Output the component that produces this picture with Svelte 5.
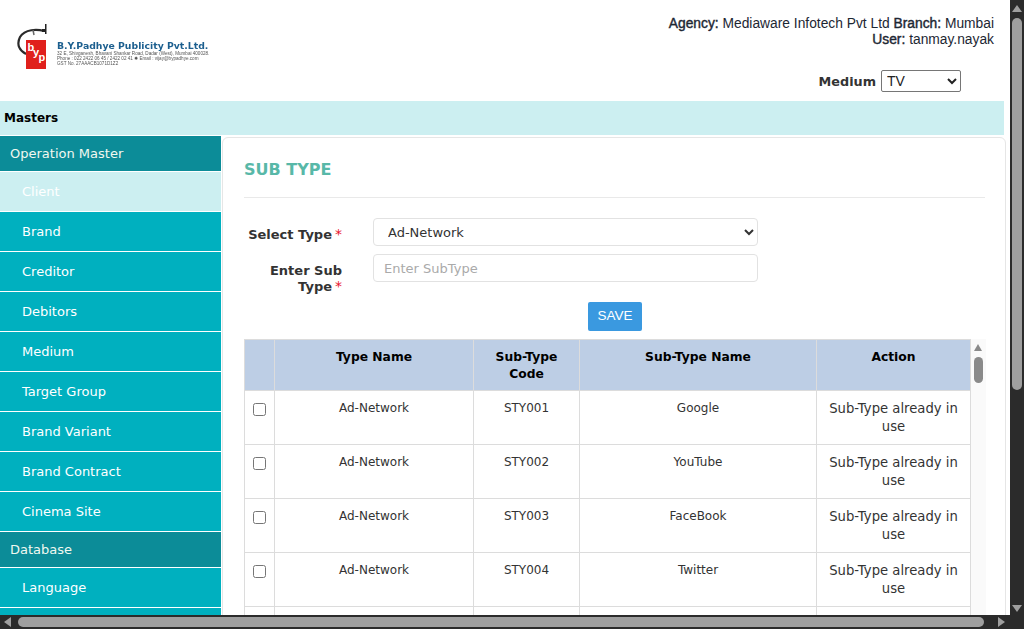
<script>
  const menu = [
    { label: "Operation Master", head: true },
    { label: "Client", active: true },
    { label: "Brand" },
    { label: "Creditor" },
    { label: "Debitors" },
    { label: "Medium" },
    { label: "Target Group" },
    { label: "Brand Variant" },
    { label: "Brand Contract" },
    { label: "Cinema Site" },
    { label: "Database", head: true },
    { label: "Language" },
    { label: "" },
  ];

  const rows = [
    { code: "STY001", name: "Google" },
    { code: "STY002", name: "YouTube" },
    { code: "STY003", name: "FaceBook" },
    { code: "STY004", name: "Twitter" },
  ];
</script>

<div class="shell">
  <div class="upper">
    <div class="page">
      <header>
        <div class="logo">
          <svg width="34" height="46" viewBox="0 0 34 46">
            <path d="M27 7 C20 5 8 5 3 13 C-1 21 3 27 9 30" fill="none" stroke="#2a2a2a" stroke-width="2.200" />
            <path d="M25 5 L28 5 L28 0 L29.500 0 L29.500 10 L28 10 L28 8 L25 8 Z" fill="#222" />
            <path d="M16 6 L17 11" stroke="#666" stroke-width="1.500" />
            <rect x="9" y="16" width="20" height="29" fill="#e0201c" />
            <text class="mark" x="10.500" y="27">b</text>
            <text class="mark" x="16" y="32">y</text>
            <text class="mark" x="21.500" y="37">p</text>
          </svg>
          <div class="logo-text">
            <div class="logo-name">B.Y.Padhye Publicity Pvt.Ltd.</div>
            <div class="logo-small">32 E, Shivganesh, Bhavani Shankar Road, Dadar (West), Mumbai 400028.</div>
            <div class="logo-small">Phone : 022 2422 06 45 / 2422 02 41 ✹ Email : vijay@bypadhye.com</div>
            <div class="logo-small">GST No. 27AAACB1071D1Z2</div>
          </div>
        </div>
        <div class="info">
          <div class="agency"><span class="key">Agency:</span> Mediaware Infotech Pvt Ltd <span class="key">Branch:</span> Mumbai</div>
          <div class="agency"><span class="key">User:</span> tanmay.nayak</div>
          <div class="medium">
            <label for="medium">Medium</label>
            <select id="medium"><option>TV</option></select>
          </div>
        </div>
      </header>

      <div class="masters">Masters</div>

      <div class="body">
        <nav>
          {#each menu as item}
            <div class="item" class:head={item.head} class:active={item.active}>{item.label}</div>
          {/each}
        </nav>

        <main>
          <h2>SUB TYPE</h2>
          <div class="form">
            <div class="field">
              <label for="type">Select Type<span class="req">*</span></label>
              <select id="type"><option>Ad-Network</option></select>
            </div>
            <div class="field second">
              <label for="sub">Enter Sub Type<span class="req">*</span></label>
              <input id="sub" placeholder="Enter SubType" />
            </div>
            <div class="actions"><button>SAVE</button></div>
          </div>

          <div class="table-wrap">
            <table>
              <colgroup>
                <col style="width:30px" />
                <col style="width:199px" />
                <col style="width:106px" />
                <col style="width:237px" />
                <col style="width:154px" />
              </colgroup>
              <thead>
                <tr>
                  <th></th>
                  <th>Type Name</th>
                  <th>Sub-Type Code</th>
                  <th>Sub-Type Name</th>
                  <th>Action</th>
                </tr>
              </thead>
              <tbody>
                {#each rows as row}
                  <tr>
                    <td class="check"><input type="checkbox" /></td>
                    <td>Ad-Network</td>
                    <td>{row.code}</td>
                    <td>{row.name}</td>
                    <td class="action">Sub-Type already in use</td>
                  </tr>
                {/each}
                <tr>
                  <td></td>
                  <td></td>
                  <td></td>
                  <td></td>
                  <td></td>
                </tr>
              </tbody>
            </table>
            <div class="inner-scroll">
              <div class="up-small"></div>
              <div class="thumb-small"></div>
            </div>
          </div>
        </main>
      </div>
    </div>

    <div class="vbar">
      <div class="arrow-up"></div>
      <div class="vthumb"></div>
      <div class="arrow-down"></div>
    </div>
  </div>

  <div class="hbar">
    <div class="arrow-left"></div>
    <div class="hthumb"></div>
    <div class="arrow-right"></div>
  </div>
</div>

<style>
  :global(body) {
    margin: 0;
    background: #fff;
    overflow: hidden;
  }

  .shell {
    width: 1024px;
    height: 629px;
    display: flex;
    flex-direction: column;
    overflow: hidden;
    font-family: "DejaVu Sans", Verdana, sans-serif;
    font-size: 13px;
    color: #333;
  }

  .upper {
    flex: 1;
    min-height: 0;
    display: flex;
  }

  .page {
    flex: 1;
    min-width: 0;
    overflow: hidden;
  }

  header {
    height: 101px;
    display: flex;
    justify-content: space-between;
    box-sizing: border-box;
  }

  .logo {
    display: flex;
    align-items: flex-end;
    gap: 6px;
    padding: 24px 0 0 17px;
    height: 46px;
    filter: blur(0.3px);
  }

  .mark {
    font-family: "Liberation Sans", Arial, sans-serif;
    font-weight: bold;
    font-size: 11px;
    fill: #fff;
  }

  .logo-text {
    padding-bottom: 4px;
  }

  .logo-name {
    font-family: "DejaVu Sans", Verdana, sans-serif;
    font-weight: bold;
    font-size: 9.300px;
    line-height: 11px;
    color: #1c5f8f;
    white-space: nowrap;
  }

  .logo-small {
    font-family: "Liberation Sans", Arial, sans-serif;
    font-size: 4.600px;
    line-height: 5px;
    color: #555;
    white-space: nowrap;
  }

  .info {
    padding: 16px 16px 0 0;
    text-align: right;
  }

  .agency {
    font-family: "Liberation Sans", Arial, sans-serif;
    font-size: 13.800px;
    line-height: 16px;
    color: #1d2733;
  }

  .key {
    -webkit-text-stroke: 0.4px #1d2733;
  }

  .medium {
    margin: 22px 33px 0 0;
    display: flex;
    justify-content: flex-end;
    align-items: center;
    gap: 5px;
  }

  .medium label {
    font-weight: bold;
    font-size: 12.800px;
    color: #333;
  }

  .medium select {
    width: 80px;
    height: 22px;
    border: 1px solid #767676;
    border-radius: 2px;
    background: #fff;
    font-family: "Liberation Sans", Arial, sans-serif;
    font-size: 14px;
    color: #222;
    padding: 0 0 0 1px;
  }

  .masters {
    width: 1004px;
    height: 34px;
    background: #cceff1;
    box-sizing: border-box;
    padding-left: 4px;
    line-height: 34px;
    font-weight: bold;
    font-size: 12px;
    color: #000;
  }

  .body {
    display: flex;
    align-items: flex-start;
    padding-top: 1px;
  }

  nav {
    width: 221px;
    flex: none;
    margin-right: 1px;
  }

  .item {
    height: 39px;
    margin-bottom: 1px;
    box-sizing: border-box;
    padding-left: 22px;
    line-height: 39px;
    background: #00b0bf;
    color: #fff;
  }

  .item.head {
    height: 35px;
    padding-left: 10px;
    line-height: 35px;
    background: #0c8c98;
    color: #f0f8f0;
  }

  .item.active {
    background: #cceff1;
  }

  main {
    width: 784px;
    flex: none;
    box-sizing: border-box;
    margin-top: 1px;
    padding: 0 20px 0 21px;
    border: 1px solid #e6e6e6;
    border-radius: 6px 6px 0 0;
    background: #fff;
  }

  h2 {
    margin: 0;
    height: 59px;
    line-height: 63px;
    font-family: "DejaVu Sans", Verdana, sans-serif;
    font-size: 16px;
    font-weight: bold;
    color: #58b8a8;
    border-bottom: 1px solid #e9e9e9;
  }

  .form {
    padding-top: 20px;
  }

  .field {
    display: flex;
    align-items: flex-start;
    gap: 31px;
    margin-bottom: 8px;
  }

  .field.second {
    margin-bottom: 7px;
  }

  .field label {
    width: 98px;
    flex: none;
    text-align: right;
    font-weight: bold;
    font-size: 13px;
    line-height: 16px;
    color: #333;
    padding-top: 9px;
  }

  .req {
    color: #e8122d;
    margin-left: 3px;
    font-weight: normal;
    font-size: 14px;
    line-height: 14px;
  }

  .field select,
  .field input {
    width: 385px;
    height: 28px;
    box-sizing: border-box;
    border: 1px solid #e2e2e2;
    border-radius: 4px;
    background: #fff;
    font-family: "DejaVu Sans", Verdana, sans-serif;
    font-size: 13px;
    color: #333;
  }

  .field select {
    padding-left: 10px;
  }

  .field input {
    padding: 0 10px;
  }

  .field input::placeholder {
    color: #aaa;
    opacity: 1;
  }

  .actions {
    width: 742px;
    box-sizing: border-box;
    padding-left: 344px;
  }

  button {
    display: block;
    width: 54px;
    height: 29px;
    border: none;
    border-radius: 2px;
    padding: 0 0 2px;
    background: #3a99e0;
    color: #fff;
    font-family: "Liberation Sans", Arial, sans-serif;
    font-size: 13.500px;
  }

  .table-wrap {
    margin-top: 8px;
    display: flex;
    align-items: flex-start;
    width: 742px;
    height: 300px;
    background: #fafafa;
  }

  table {
    width: 727px;
    flex: none;
    table-layout: fixed;
    border-collapse: collapse;
    background: #fff;
    font-size: 12px;
    color: #333;
  }

  th,
  td {
    border: 1px solid #dcdcdc;
    text-align: center;
    vertical-align: top;
    box-sizing: border-box;
  }

  th {
    height: 51px;
    padding: 9px 8px 0;
    background: #bdcee5;
    color: #000;
    font-size: 12.300px;
    line-height: 17px;
  }

  td {
    height: 54px;
    padding: 8px 8px 0;
    line-height: 18px;
  }

  td.action {
    font-size: 13.200px;
    line-height: 18px;
    padding: 9px 4px 0;
  }

  td.check {
    padding: 12px 0 0;
  }

  td.check input {
    margin: 0;
    width: 13px;
    height: 13px;
    vertical-align: top;
  }

  .inner-scroll {
    width: 15px;
    height: 100%;
  }

  .up-small {
    margin: 5px 0 0 3px;
    width: 0;
    height: 0;
    border-left: 4.500px solid transparent;
    border-right: 4.500px solid transparent;
    border-bottom: 7px solid #8a8a8a;
  }

  .thumb-small {
    margin: 6px 0 0 3px;
    width: 9px;
    height: 26px;
    border-radius: 5px;
    background: #8a8a8a;
  }

  .vbar {
    width: 14px;
    flex: none;
    background: #2b2b2b;
    display: flex;
    flex-direction: column;
    align-items: center;
  }

  .arrow-up {
    margin-top: 5px;
    width: 0;
    height: 0;
    border-left: 5px solid transparent;
    border-right: 5px solid transparent;
    border-bottom: 7px solid #9f9f9f;
  }

  .vthumb {
    margin-top: 6px;
    width: 10px;
    height: 372px;
    border-radius: 5px;
    background: #9f9f9f;
  }

  .arrow-down {
    margin-top: auto;
    margin-bottom: 3px;
    width: 0;
    height: 0;
    border-left: 5px solid transparent;
    border-right: 5px solid transparent;
    border-top: 7px solid #9f9f9f;
  }

  .hbar {
    height: 14px;
    flex: none;
    background: #2b2b2b;
    display: flex;
    align-items: center;
    box-sizing: border-box;
    padding-left: 4px;
  }

  .arrow-left {
    width: 0;
    height: 0;
    border-top: 5px solid transparent;
    border-bottom: 5px solid transparent;
    border-right: 7px solid #9f9f9f;
  }

  .hthumb {
    margin-left: 7px;
    width: 966px;
    height: 10px;
    border-radius: 5px;
    background: #9f9f9f;
  }

  .arrow-right {
    margin-left: 14px;
    width: 0;
    height: 0;
    border-top: 5px solid transparent;
    border-bottom: 5px solid transparent;
    border-left: 7px solid #9f9f9f;
  }
</style>
